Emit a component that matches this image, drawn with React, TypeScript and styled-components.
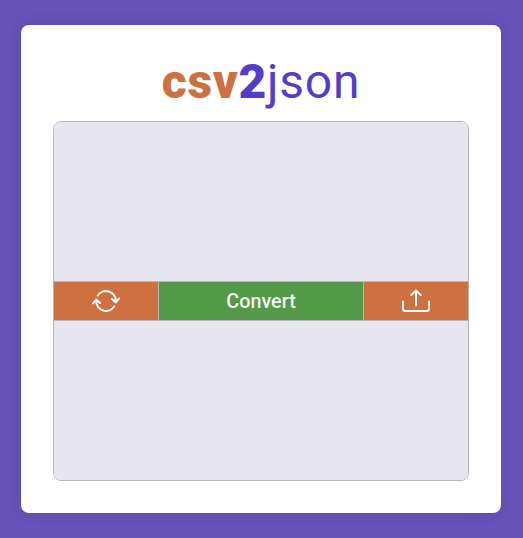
import React from "react";
import styled, { createGlobalStyle } from "styled-components";

const GlobalStyle = createGlobalStyle`
  * { box-sizing: border-box; }
  body {
    margin: 0;
    background: #6753b9;
    font-family: Roboto, sans-serif;
  }
`;

const Page = styled.main`
  min-height: 100vh;
  display: flex;
  align-items: center;
  justify-content: center;
  padding-right: 1px;
`;

const Card = styled.section`
  width: 480px;
  height: 488px;
  padding: 32px;
  background: #fff;
  border-radius: 8px;
  box-shadow: 0 0 16px rgba(0, 0, 0, 0.1);
`;

const Title = styled.h1`
  height: 64px;
  margin: 0;
  text-align: center;
  font-size: 48px;
  line-height: 50px;
  font-weight: 400;
  letter-spacing: 0.75px;
  color: #553dcb;
`;

const Strong = styled.span<{ $color?: string }>`
  font-weight: 900;
  color: ${({ $color }) => $color ?? "inherit"};
`;

const Converter = styled.div`
  height: 360px;
  display: flex;
  flex-direction: column;
  border: 1px solid #b8b8b8;
  border-radius: 8px;
  overflow: hidden;
`;

const TextPane = styled.textarea`
  flex: 1;
  width: 100%;
  min-height: 0;
  padding: 8px;
  border: 0;
  outline: 0;
  resize: none;
  background: #e7e6f0;
`;

const Toolbar = styled.div`
  height: 40px;
  display: grid;
  grid-template-columns: 104px 1fr 104px;
  column-gap: 1px;
  border: solid #b8b8b8;
  border-width: 1px 0;
  background: #b8b8b8;
`;

const Action = styled.button<{ $primary?: boolean }>`
  display: flex;
  align-items: center;
  justify-content: center;
  padding: 0;
  border: 0;
  color: #f4f4f4;
  background: ${({ $primary }) => ($primary ? "#529a48" : "#cc713f")};
  font: 500 19.8px Roboto, sans-serif;
`;

const Icon = styled.svg`
  width: 32px;
  height: 32px;
  fill: none;
  stroke: #fff;
  stroke-width: 2;
  stroke-linecap: round;
  stroke-linejoin: round;
`;

export default function App() {
  return (
    <>
      <GlobalStyle />
      <Page>
        <Card>
          <Title>
            <Strong $color="#cc713f">csv</Strong>
            <Strong>2</Strong>json
          </Title>
          <Converter>
            <TextPane aria-label="CSV" />
            <Toolbar>
              <Action aria-label="Reset">
                <Icon viewBox="0 0 32 32">
                  <path d="M7.8 10.5A9.8 9.8 0 0 1 25.8 16v1.3M21.9 14l3.9 3.4 3.2-3.8" />
                  <path d="M24.2 21.5A9.8 9.8 0 0 1 6.2 16v-1.3M10.1 18l-3.9-3.4-3.2 3.8" />
                </Icon>
              </Action>
              <Action $primary>Convert</Action>
              <Action aria-label="Upload">
                <Icon viewBox="0 0 32 32">
                  <path d="M3 16.5v7Q3 26 5.5 26h21q2.5 0 2.5-2.5v-7M16 20.5V5.5M11.2 10.1L16 5.5l4.8 4.6" />
                </Icon>
              </Action>
            </Toolbar>
            <TextPane aria-label="JSON" />
          </Converter>
        </Card>
      </Page>
    </>
  );
}
